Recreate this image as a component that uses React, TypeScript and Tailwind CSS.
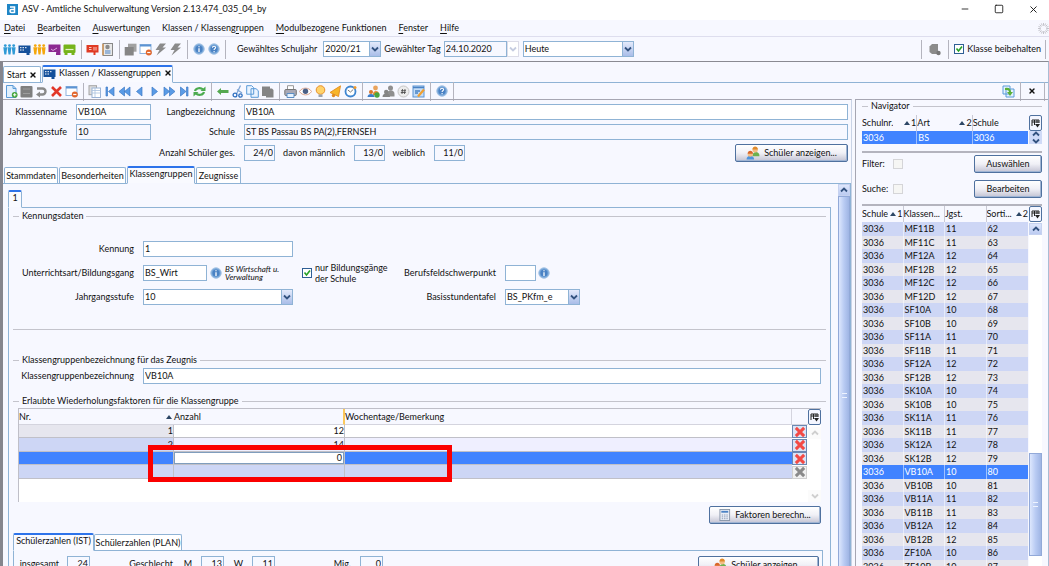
import type { ReactNode } from 'react'
import { Minus, Square, X } from 'lucide-react'
import { clsx } from 'clsx'

function Svg({ children, size = 13 }: { children: ReactNode; size?: number }) {
  return (
    <svg width={size} height={size} viewBox="0 0 13 13" fill="none" className="shrink-0" aria-hidden="true">
      {children}
    </svg>
  )
}

const people = (color: string) => (
  <Svg>
    <g fill={color}>
      <circle cx="2.3" cy="2.600" r="1.400" />
      <circle cx="6.5" cy="2.600" r="1.400" />
      <circle cx="10.7" cy="2.600" r="1.400" />
      <path d="M.3 4.300h3.900L3.300 11.500H1.300zM4.500 4.300h3.900L7.500 11.500h-2zM8.700 4.300h3.900L11.700 11.500h-2z" />
    </g>
  </Svg>
)

const board = (color: string) => (
  <Svg>
    <path d="M.5 2.500h12v7.500h-1v2h-3v-2h-8z" fill={color} />
    <path d="M2 4.700h1.500M4.500 4.700H6M2 7h1.500M4.500 7H6M7 4.700h1.500" stroke="#fff" strokeWidth="1" />
  </Svg>
)

const bolt = (
  <Svg>
    <path d="M6 .5h6L8.500 4.500h3.500L2.500 12.500l3-5.500H1.500z" fill="#8b8b8b" />
  </Svg>
)

const disc = (letter: 'i' | '?', size = 12) => (
  <Svg size={size}>
    <circle cx="6.5" cy="6.5" r="5.700" fill="#79a8da" stroke="#a5c3e4" />
    <circle cx="6.5" cy="6.5" r="3.900" fill="#4a82c4" />
    {letter === 'i'
      ? <path d="M6.500 3.400v1.200M6.500 5.700v4" stroke="#fff" strokeWidth="1.400" />
      : <path d="M4.800 5.200c0-2.200 3.500-2.200 3.500-.2 0 1.300-1.700 1.300-1.700 2.500M6.600 8.600v1.300" stroke="#fff" strokeWidth="1.200" />}
  </Svg>
)

const windowIcon = (
  <Svg>
    <rect x="1" y="1.500" width="11" height="9" fill="#fff" stroke="#8fb3de" />
    <path d="M1 2.500h11" stroke="#5b93d3" strokeWidth="2" />
    <circle cx="9.800" cy="9.500" r="3" fill="#e2662c" />
    <path d="M8.200 9.500h3.200" stroke="#fff" strokeWidth="1.200" />
  </Svg>
)

const pupils = (
  <Svg size={14}>
    <path d="M6 9c0-4.500 6.500-4.500 6.500 0v.5H6z" fill="#6cb04f" />
    <circle cx="8.500" cy="3.500" r="2.500" fill="#f3bd84" />
    <path d="M6 3.200c0-3.800 5-3.800 5 0z" fill="#e08a2b" />
    <path d="M.5 12.500c0-4.500 7-4.500 7 0z" fill="#4b93dd" />
    <circle cx="4" cy="7.500" r="2.500" fill="#f3bd84" />
    <path d="M1.500 7.200c0-3.800 5-3.800 5 0z" fill="#d9672b" />
  </Svg>
)

const playPath = (d: string) => (
  <Svg>
    <path d={d} fill="#5a9be6" stroke="#3c78c4" strokeWidth=".7" />
  </Svg>
)

const cross = (color: string, size = 13, width = 2.6) => (
  <Svg size={size}>
    <path d="M2 2l9 9M11 2l-9 9" stroke={color} strokeWidth={width} />
  </Svg>
)

const moduleIcons: { label: string; icon: ReactNode }[][] = [
  [
    { label: 'Schüler', icon: people('#2f9ad6') },
    { label: 'Klassen', icon: board('#14509b') },
    { label: 'Lehrkräfte', icon: people('#f5a70c') },
    { label: 'Unterricht', icon: <Svg><path d="M.5 1.500h12v7.500H.5z" fill="#8c2a92" /><path d="M3 6l2 1.500L9 5" stroke="#d9a6dc" /><path d="M8 9.500c1-1.500 4-1.500 4.500 0v2.500H8z" fill="#8c2a92" /></Svg> },
    { label: 'Schulen', icon: <Svg><rect x=".5" y="1.500" width="12" height="8.500" rx="1" fill="#76b41c" /><path d="M2.500 6.500h8" stroke="#e4f2c8" strokeWidth="1.200" /><path d="M1.500 11h3M8.500 11h3" stroke="#76b41c" strokeWidth="2" /></Svg> },
  ],
  [
    { label: 'Fächer', icon: <Svg><path d="M.5 2h12v7.500h-3v2.500h-2V9.500h-7z" fill="#e03a24" /><path d="M3 4.500h2.500M3 6.500h2.500M8 4v3.500M10 4v3.500" stroke="#fbc5bd" /></Svg> },
    { label: 'Berichte', icon: <Svg><rect x="2" y=".5" width="9.500" height="12" fill="#e8e8e8" stroke="#888" /><circle cx="6.500" cy="4" r="2.200" fill="#8a8a8a" /><path d="M4 8h5.500M4 10h5.500" stroke="#4a82c4" strokeWidth="1.200" /><path d="M2 1v11" stroke="#d48a3c" strokeWidth="1.200" /></Svg> },
  ],
  [
    { label: 'Stapel', icon: <Svg><path d="M4 .7h8.500v8H4z" fill="#a2a2a2" /><path d="M.7 4h9v8.500h-9z" fill="#868686" /></Svg> },
    { label: 'Fenster', icon: windowIcon },
    { label: 'Abgleich', icon: bolt },
    { label: 'Aktualisierung', icon: bolt },
  ],
  [
    { label: 'Info', icon: disc('i') },
    { label: 'Hilfe', icon: disc('?') },
  ],
]

const editIcons: { label: string; icon: ReactNode }[][] = [
  [
    { label: 'Neu', icon: <Svg><path d="M1.500.5h6.500l3 3v9H1.500z" fill="#e0effd" stroke="#5b9bd8" /><path d="M8 .5v3h3" stroke="#5b9bd8" /><circle cx="9.700" cy="9.800" r="2.900" fill="#44a63c" /><path d="M9.700 8.200v3.200M8.100 9.800h3.200" stroke="#fff" /></Svg> },
    { label: 'Speichern', icon: <Svg><rect x=".5" y="1" width="12" height="11.500" rx="1" fill="#7f7f7f" /><path d="M3 4h7M3 8.500h7" stroke="#9d9d9d" /></Svg> },
    { label: 'Rückgängig', icon: <Svg><path d="M2 3.500h5.500a3 3 0 010 6H3" stroke="#8a8a8a" strokeWidth="2.400" /><path d="M5 6.500v6l-4-3z" fill="#8a8a8a" /></Svg> },
    { label: 'Löschen', icon: cross('#e2382a') },
    { label: 'Schließen', icon: windowIcon },
  ],
  [
    { label: 'Tabelle', icon: <Svg><rect x="1" y=".7" width="7.500" height="9" fill="#ddd" stroke="#a5a5a5" /><rect x="4" y="3" width="8.500" height="9.500" fill="#fff" stroke="#9ab3d6" /><path d="M4 5.500h8.500M4 8h8.500M7 3v9" stroke="#a8c0de" strokeWidth=".8" /></Svg> },
    { label: 'Erster', icon: playPath('M3 2h1.500v9H3zM11 2v9L5.500 6.500z') },
    { label: 'Zurück blättern', icon: playPath('M6.500 2v9L1 6.500zM12 2v9L6.500 6.500z') },
    { label: 'Vorheriger', icon: playPath('M9 2v9L3.500 6.500z') },
    { label: 'Nächster', icon: playPath('M4 2v9l5.500-4.500z') },
    { label: 'Vor blättern', icon: playPath('M1 2v9l5.500-4.500zM6.500 2v9L12 6.500z') },
    { label: 'Letzter', icon: playPath('M2.500 2v9L8 6.500zM8.500 2H10v9H8.500z') },
    { label: 'Aktualisieren', icon: <Svg><path d="M2 6a4.500 3.500 0 018-1.500M11 7a4.500 3.500 0 01-8 1.500" stroke="#4bab4f" strokeWidth="2.200" /><path d="M12.500 1.500v4.500h-5zM.5 11.500V7h5z" fill="#4bab4f" /></Svg> },
  ],
  [
    { label: 'Zurück', icon: <Svg><path d="M1 6.500l4-3.500v2h7.500v3H5v2z" fill="#55a850" /></Svg> },
    { label: 'Ausschneiden', icon: <Svg><path d="M9.500.5L5.500 9M6 4.500l5 3.500" stroke="#7fa6d6" strokeWidth="1.300" /><circle cx="4" cy="10" r="1.900" stroke="#2f6fc0" strokeWidth="1.300" /><circle cx="9.500" cy="10.500" r="1.700" stroke="#2f6fc0" strokeWidth="1.300" /></Svg> },
    { label: 'Kopieren', icon: <Svg><path d="M.7.700h5l2 2v6.500h-7zM5 3.700h5l2.300 2v6.600H5z" fill="#eaf4ff" stroke="#5b9bd8" /></Svg> },
    { label: 'Einfügen', icon: <Svg><path d="M1 1.500h8v2h2l1.500 1.500v7.500H5V11H1z" fill="#858585" /></Svg> },
  ],
  [
    { label: 'Drucken', icon: <Svg><path d="M3.500 5V.7h6V5" fill="#fff" stroke="#999" /><rect x=".8" y="4.500" width="11.500" height="6" rx="1" fill="#a9a9b6" stroke="#777" /><path d="M3 8.500h7v4H3z" fill="#e6f2ff" stroke="#5b8dc4" /></Svg> },
    { label: 'Vorschau', icon: <Svg><path d="M.5 6.500C3 2 10 2 12.500 6.500 10 11 3 11 .5 6.500z" fill="#fff" stroke="#dba58f" /><circle cx="6.500" cy="6.300" r="2.700" fill="#4a5f86" /></Svg> },
    { label: 'Hinweise', icon: <Svg><circle cx="6.500" cy="5" r="4.300" fill="#ffd36b" stroke="#e88f2a" /><path d="M4.500 9.500h4v2.500h-4z" fill="#9aa3ad" /></Svg> },
    { label: 'Erinnerung', icon: <Svg><path d="M11.500.8l-2 10.700-8.500-4z" fill="#f8b62b" stroke="#e28c1f" strokeWidth=".9" /><circle cx="4.500" cy="10.500" r="1.700" fill="#e28c1f" /></Svg> },
    { label: 'Wiedervorlage', icon: <Svg><circle cx="6.500" cy="6.500" r="5" fill="#fff" stroke="#3f86d1" strokeWidth="1.800" /><path d="M3.800 5l2.700 2 2.700-2.500" stroke="#777" /><circle cx="11" cy="2.500" r="1.500" fill="#f19a2a" /></Svg> },
  ],
  [
    { label: 'Schüler zuordnen', icon: <Svg><path d="M6 9c0-4 6-4 6 0v1H6z" fill="#e48a2f" /><circle cx="8.500" cy="3" r="2.400" fill="#e9a45d" /><path d="M.5 12c0-4 7-4 7 0z" fill="#3b7cc8" /><circle cx="4" cy="7" r="2" fill="#d9752b" /><circle cx="10" cy="10" r="2.700" fill="#4aa53e" /></Svg> },
    { label: 'Gruppe', icon: <Svg><path d="M5 9c0-5 7.500-5 7.500 0v2.500H5z" fill="#8f8f8f" /><circle cx="8.500" cy="3" r="2.500" fill="#8f8f8f" /><path d="M.5 12c0-5 7.500-5 7.500 0z" fill="#858585" /><circle cx="4.200" cy="7" r="2.200" fill="#858585" /></Svg> },
    { label: 'Nummer', icon: <Svg><circle cx="6.500" cy="6.500" r="5.500" fill="#ececec" stroke="#c5c5c5" /><path d="M5.500 4L5 9M8 4l-.5 5M4 5.700h5M3.800 7.500h5" stroke="#444" strokeWidth=".8" /></Svg> },
    { label: 'Bearbeiten', icon: <Svg><rect x="1" y="1" width="11" height="11" fill="#c5ddf7" stroke="#5b93d3" /><path d="M1 2.500h11M3 6h5M3 8h3" stroke="#4a82c4" strokeWidth="1.400" /><path d="M12 4.500l-6 7" stroke="#f0a030" strokeWidth="2.200" /></Svg> },
  ],
  [{ label: 'Hilfe zum Modul', icon: disc('?') }],
]

const menus = [
  ['D', 'atei'], ['B', 'earbeiten'], ['A', 'uswertungen'], ['Klassen / Klasseng', 'r', 'uppen'],
  ['M', 'odulbezogene Funktionen'], ['F', 'enster'], ['H', 'ilfe'],
]

const classNames = [
  'MF11B', 'MF11C', 'MF12A', 'MF12B', 'MF12C', 'MF12D', 'SF10A', 'SF10B', 'SF11A', 'SF11B', 'SF12A', 'SF12B', 'SK10A',
  'SK10B', 'SK11A', 'SK11B', 'SK12A', 'SK12B', 'VB10A', 'VB10B', 'VB11A', 'VB11B', 'VB12A', 'VB12B', 'ZF10A', 'ZF10B',
]
const classes = classNames.map((name, i) => ({ name, grade: name.slice(2, 4), sort: 62 + i }))

function Separator() {
  return <span className="mr-[3px] ml-[4px] h-[19px] w-px shrink-0 bg-[#b4b4be]" />
}

function IconGroups({ groups }: { groups: { label: string; icon: ReactNode }[][] }) {
  return groups.map((group, i) => (
    <div key={i} className="flex items-center">
      {group.map(({ label, icon }) => (
        <button key={label} title={label} aria-label={label} className="flex h-4 w-[15px] items-center justify-center">
          {icon}
        </button>
      ))}
      <Separator />
    </div>
  ))
}

function Field({ label, value, className, readOnly }: { label: string; value: string; className?: string; readOnly?: boolean }) {
  return (
    <input
      aria-label={label}
      defaultValue={value}
      readOnly={readOnly}
      className={clsx('h-4 min-w-0 border border-[#8fb3d5] px-px pb-px outline-none', readOnly ? 'bg-[#f7f8ff]' : 'bg-white', className)}
    />
  )
}

function Chevron({ up, color = '#33527f' }: { up?: boolean; color?: string }) {
  return (
    <svg width="8" height="6" viewBox="0 0 8 6" fill="none" aria-hidden="true">
      <path d={up ? 'M1 4.500L4 1.500l3 3' : 'M1 1.500l3 3 3-3'} stroke={color} strokeWidth="1.800" />
    </svg>
  )
}

function Select({ label, value, className }: { label: string; value: string; className?: string }) {
  return (
    <span className={clsx('relative flex h-4', className)}>
      <select aria-label={label} className="h-full w-full appearance-none border border-[#8fb3d5] bg-white px-px pb-px outline-none">
        <option>{value}</option>
      </select>
      <span className="pointer-events-none absolute inset-y-0 right-0 flex w-3 items-center justify-center border border-[#8fb3d5] bg-linear-to-b from-[#e4eafb] to-[#a9bde8]">
        <Chevron />
      </span>
    </span>
  )
}

function Check({ label, checked, disabled }: { label: string; checked?: boolean; disabled?: boolean }) {
  return (
    <span className="relative flex size-[10px] shrink-0">
      <input
        type="checkbox"
        aria-label={label}
        defaultChecked={checked}
        disabled={disabled}
        className={clsx('size-full appearance-none border', disabled ? 'border-[#d5d5d8] bg-[#f6f6f4]' : 'border-[#2f5f95] bg-white')}
      />
      {checked && (
        <svg className="pointer-events-none absolute inset-0" width="10" height="10" viewBox="0 0 10 10" fill="none" aria-hidden="true">
          <path d="M2.500 4.500l2 2.500 3.500-4.500" stroke="#27a127" strokeWidth="1.600" />
        </svg>
      )}
    </span>
  )
}

function PushButton({ children, className }: { children: ReactNode; className?: string }) {
  return (
    <button className={clsx('flex h-[18px] items-center justify-center gap-1 rounded-[2px] border border-[#4f719f] bg-linear-to-b from-white via-[#f0f0f6] to-[#c3c3d3] shadow-[inset_-1px_-1px_0_#9fb4d3]', className)}>
      {children}
    </button>
  )
}

function Tab({ children, active, className }: { children: ReactNode; active?: boolean; className?: string }) {
  return (
    <button
      role="tab"
      aria-selected={!!active}
      className={clsx(
        'relative flex items-center justify-center gap-[3px] rounded-t-[2px] border whitespace-nowrap',
        active ? 'z-10 -mb-px h-[18px] border-x-[#8fb3d5] border-t-2 border-t-[#2d73ea] border-b-[#f7f8ff] bg-[#f9faff] pb-[3px]' : 'h-4 border-[#8fb3d5] border-b-0 bg-white',
        className,
      )}
    >
      {children}
    </button>
  )
}

function ColumnControl({ className }: { className?: string }) {
  return (
    <button aria-label="Spalten auswählen" className={clsx('flex items-center justify-center rounded-[2px] border border-[#4f719f] bg-[#f4f6ff]', className)}>
      <svg width="9" height="9" viewBox="0 0 9 9" fill="none" aria-hidden="true">
        <path d="M1 7V1h7v3M1 3h7M3.500 1v5M6 1v3" stroke="#222" />
        <path d="M4 5h5L6.500 8.500z" fill="#222" />
      </svg>
    </button>
  )
}

function SortMark({ order }: { order?: number }) {
  return (
    <span className="flex shrink-0 items-center gap-px">
      <svg width="6" height="4" viewBox="0 0 6 4" aria-hidden="true"><path d="M3 0l3 4H0z" fill="#2c4665" /></svg>
      {order}
    </span>
  )
}

function HeadCell({ children, sort }: { children: ReactNode; sort?: number }) {
  return (
    <th className="border-r border-[#c9c9d4] p-0 font-normal last:border-r-0">
      <span className="flex items-center justify-between">
        <span className="overflow-hidden text-left whitespace-nowrap">{children}</span>
        {sort && <SortMark order={sort} />}
      </span>
    </th>
  )
}

function ScrollButton({ up, disabled }: { up?: boolean; disabled?: boolean }) {
  return (
    <button
      aria-label={up ? 'Nach oben' : 'Nach unten'}
      className={clsx('flex h-3 w-full shrink-0 items-center justify-center', disabled ? 'bg-[#fbfbfb]' : 'border border-[#c6d2f0] bg-linear-to-b from-[#dfe7fc] to-[#bccbf1]')}
    >
      <Chevron up={up} color={disabled ? '#cfcfcf' : undefined} />
    </button>
  )
}

function Thumb({ className }: { className?: string }) {
  return (
    <div className={clsx('flex items-center justify-center border border-[#92a9d8] bg-linear-to-r from-[#dde7fd] via-[#b9cbf3] to-[#9fb5e4]', className)}>
      <span className="h-[5px] w-[5px] border-y border-[#eef3ff]" />
    </div>
  )
}

function Group({ title, children }: { title: string; children?: ReactNode }) {
  return (
    <fieldset className="min-w-0 border-t border-[#c4c4cc]">
      <legend className="ml-[6px] h-3 px-[3px]">{title}</legend>
      {children}
    </fieldset>
  )
}

function MenuBar() {
  return (
    <nav className="flex h-[17px] shrink-0 items-center gap-3 border-b border-[#dedeee] pl-1">
      {menus.map(parts => {
        const mid = parts.length === 3
        return (
          <button key={parts.join('')} className="whitespace-nowrap">
            {mid && parts[0]}
            <span className="underline underline-offset-2">{mid ? parts[1] : parts[0]}</span>
            {mid ? parts[2] : parts[1]}
          </button>
        )
      })}
      <svg className="ml-auto" width="11" height="11" viewBox="0 0 12 12" fill="none" aria-hidden="true">
        <path d="M6 0v3M6 9v3M0 6h3M9 6h3M1.800 1.800l2 2M8.200 8.200l2 2M1.800 10.200l2-2M8.200 3.800l2-2M3.700.500l1 2.500M7.300 9l1 2.500M8.300.500l-1 2.500M4.700 9l-1 2.500M.5 3.700L3 4.700M9 7.300l2.500 1M.5 8.300l2.500-1M9 4.700l2.500-1" stroke="#b9b9c0" strokeWidth=".9" />
      </svg>
    </nav>
  )
}

function ModuleBar() {
  return (
    <div className="flex h-6 shrink-0 items-center pl-[2px]">
      <IconGroups groups={moduleIcons} />
      <label className="ml-2 whitespace-nowrap">Gewähltes Schuljahr</label>
      <Select label="Gewähltes Schuljahr" value="2020/21" className="ml-[6px] w-[58px]" />
      <label className="ml-[3px] whitespace-nowrap">Gewählter Tag</label>
      <Field label="Gewählter Tag" value="24.10.2020" readOnly className="ml-[3px] w-[63px]" />
      <span className="flex h-4 w-3 items-center justify-center border border-[#dcdce8] bg-white"><Chevron color="#c5cce0" /></span>
      <Select label="Zeitpunkt" value="Heute" className="ml-1 w-[111px]" />
      <div className="ml-auto flex items-center">
        <Separator />
        <button aria-label="Datenbank" className="mx-[3px]">
          <Svg><path d="M4 1h6v10H4L1.500 9V3.500z" fill="#8b8b8b" /><circle cx="10.500" cy="10" r="2.200" fill="#777" /></Svg>
        </button>
        <Separator />
        <label className="ml-[2px] flex items-center gap-[3px] whitespace-nowrap">
          <Check label="Klasse beibehalten" checked />
          Klasse beibehalten
        </label>
        <Separator />
      </div>
    </div>
  )
}

function ClassHeader() {
  return (
    <div className="flex flex-col gap-1 pt-1 pr-[3px]">
      <div className="flex items-center">
        <span className="w-16 text-right">Klassenname</span>
        <Field label="Klassenname" value="VB10A" className="ml-[9px] w-[75px]" />
        <span className="w-[84px] text-right">Langbezeichnung</span>
        <Field label="Langbezeichnung" value="VB10A" className="ml-[9px] flex-1" />
      </div>
      <div className="flex items-center">
        <span className="w-16 text-right">Jahrgangsstufe</span>
        <Field label="Jahrgangsstufe" value="10" readOnly className="ml-[9px] w-[75px]" />
        <span className="w-[84px] text-right">Schule</span>
        <Field label="Schule" value="ST BS Passau BS PA(2),FERNSEH" readOnly className="ml-[9px] flex-1" />
      </div>
      <div className="flex items-center">
        <span className="w-[232px] text-right">Anzahl Schüler ges.</span>
        <Field label="Anzahl Schüler gesamt" value="24/0" readOnly className="ml-[9px] w-[31px] text-right" />
        <span className="w-[70px] text-right">davon männlich</span>
        <Field label="davon männlich" value="13/0" readOnly className="ml-[9px] w-[31px] text-right" />
        <span className="w-10 text-right">weiblich</span>
        <Field label="weiblich" value="11/0" readOnly className="ml-[9px] w-[31px] text-right" />
        <PushButton className="ml-auto w-[113px]">{pupils}Schüler anzeigen...</PushButton>
      </div>
    </div>
  )
}

function FactorTable() {
  const rows = [
    { nr: '1', count: '12', left: 'bg-[#e6e6ee]', right: 'bg-white' },
    { nr: '2', count: '14', left: 'bg-[#cdd6f5]', right: 'bg-[#efefff]' },
    { nr: '', count: '0', left: 'bg-[#4083ff]', right: 'bg-[#4083ff]', editing: true },
    { nr: '', count: '', left: 'bg-[#cdd6f5]', right: 'bg-[#cdd6f5]' },
  ]
  return (
    <div className="relative mx-[5px] flex h-[94px] border-t border-l border-[#bfbfc8] bg-white">
      <div className="min-w-0 flex-1">
        <table className="w-full table-fixed border-separate border-spacing-0">
          <colgroup>
            <col className="w-[155px]" />
            <col className="w-[171px]" />
            <col />
            <col className="w-4" />
          </colgroup>
          <thead>
            <tr className="h-4 bg-[#f7f8ff]">
              <th className="border-b border-[#d4d4de] p-0 font-normal">
                <span className="flex items-center justify-between pr-[2px]">Nr.<SortMark /></span>
              </th>
              <th className="border-r-2 border-b border-r-[#fbc95c] border-b-[#d4d4de] p-0 text-left font-normal">Anzahl</th>
              <th className="border-r border-b border-[#d4d4de] p-0 text-left font-normal">Wochentage/Bemerkung</th>
              <th className="border-b border-[#d4d4de] p-0" />
            </tr>
          </thead>
          <tbody>
            {rows.map((row, i) => (
              <tr key={i} className="h-[13px] even:h-[14px]">
                <td className={clsx('border-r border-b border-[#c0c0c8] p-0 text-right', row.left)}>{row.nr}</td>
                <td className={clsx('border-r border-b border-[#c0c0c8] p-0 text-right', row.editing ? 'bg-white' : row.right)}>
                  {row.editing
                    ? <input aria-label="Anzahl" defaultValue={row.count} className="block h-3 w-full border border-[#7f9dbd] bg-white pr-px text-right outline-none" />
                    : row.count}
                </td>
                <td className={clsx('border-b border-[#c0c0c8] p-0', row.right)} />
                <td className="p-0">
                  <button
                    aria-label="Zeile löschen"
                    className={clsx('flex h-[13px] w-[15px] items-center justify-center border', i < 3 ? 'border-[#6b88b3] bg-[#dbe4f6]' : 'border-[#d0d0d0] bg-[#f0f0f0]')}
                  >
                    {cross(i < 3 ? '#f34a45' : '#8a8a8a', 12, 3.2)}
                  </button>
                </td>
              </tr>
            ))}
          </tbody>
        </table>
      </div>
      <div className="flex w-[13px] flex-col justify-between">
        <div>
          <ColumnControl className="mb-[2px] h-4 w-full" />
          <ScrollButton up disabled />
        </div>
        <ScrollButton disabled />
      </div>
      {/* highlight around the edited cell */}
      <div className="pointer-events-none absolute top-[36px] left-[129px] h-[37px] w-[304px] border-[5px] border-[#fb0000]" />
    </div>
  )
}

function GroupPanel() {
  return (
    <div className="min-w-0 flex-1 pt-[6px] pr-[7px] pl-[5px]">
      <div role="tablist" className="flex items-end border-b border-[#8fb3d5]">
        <Tab active className="w-[14px]">1</Tab>
      </div>
      <div className="flex flex-col border-x border-[#8fb3d5] pt-[2px] pr-[4px] pb-10 pl-[4px]">
        <Group title="Kennungsdaten">
          <div className="grid grid-cols-[121px_1fr] items-center gap-x-[9px] gap-y-2 pt-[19px] pb-6">
            <span className="text-right">Kennung</span>
            <Field label="Kennung" value="1" className="w-[150px]" />
            <span className="text-right whitespace-nowrap">Unterrichtsart/Bildungsgang</span>
            <div className="flex h-4 items-center">
              <Field label="Unterrichtsart/Bildungsgang" value="BS_Wirt" className="w-16" />
              <button aria-label="Info Bildungsgang" className="ml-[3px]">{disc('i')}</button>
              <p className="ml-[3px] w-[74px] text-[8px] leading-[8px] italic">BS Wirtschaft u. Verwaltung</p>
              <label className="ml-[3px] flex w-[99px] items-center gap-[3px] leading-[11px]">
                <Check label="nur Bildungsgänge der Schule" checked />
                <span className="whitespace-nowrap">nur Bildungsgänge<br />der Schule</span>
              </label>
              <span className="w-[95px] text-right">Berufsfeldschwerpunkt</span>
              <Field label="Berufsfeldschwerpunkt" value="" className="ml-[9px] w-[31px]" />
              <button aria-label="Info Schwerpunkt" className="ml-[2px]">{disc('i')}</button>
            </div>
            <span className="text-right">Jahrgangsstufe</span>
            <div className="flex items-center">
              <Select label="Jahrgangsstufe der Gruppe" value="10" className="w-[150px]" />
              <span className="w-[203px] text-right">Basisstundentafel</span>
              <Select label="Basisstundentafel" value="BS_PKfm_e" className="ml-[9px] w-[75px]" />
            </div>
          </div>
        </Group>
        <hr className="mb-6 border-[#c4c4cc]" />
        <Group title="Klassengruppenbezeichnung für das Zeugnis">
          <div className="grid grid-cols-[121px_1fr] items-center gap-x-[9px] pt-[2px] pr-[5px] pb-[11px]">
            <span className="text-right">Klassengruppenbezeichnung</span>
            <Field label="Klassengruppenbezeichnung" value="VB10A" />
          </div>
        </Group>
        <Group title="Erlaubte Wiederholungsfaktoren für die Klassengruppe">
          <div className="pt-px"><FactorTable /></div>
          <div className="flex justify-end pt-1 pr-[5px]">
            <PushButton className="w-28">
              <Svg size={12}><rect x="1" y=".5" width="10.500" height="12" fill="#e9eef6" stroke="#8794a8" /><path d="M2.500 3h7.500" stroke="#4a82c4" strokeWidth="2" /><path d="M3 6.500h7M3 8.500h7M3 10.500h7" stroke="#8898b4" strokeDasharray="1.500 1" /></Svg>
              Faktoren berechn...
            </PushButton>
          </div>
        </Group>
        <div role="tablist" className="mt-[9px] mr-[3px] flex items-end border-b border-[#8fb3d5]">
          <Tab active className="w-[81px]">Schülerzahlen (IST)</Tab>
          <Tab className="w-[88px]">Schülerzahlen (PLAN)</Tab>
        </div>
        <div className="mr-[3px] flex h-10 items-start border-x border-[#8fb3d5] pt-[5px] pr-[3px] leading-4">
          <span className="w-[45px] text-right">insgesamt</span>
          <Field label="insgesamt" value="24" readOnly className="ml-[8px] w-[23px] text-right" />
          <span className="w-[83px] text-right">Geschlecht</span>
          <span className="w-[19px] text-right">M</span>
          <Field label="Anzahl M" value="13" readOnly className="ml-[9px] w-[23px] text-right" />
          <span className="w-[19px] text-right">W</span>
          <Field label="Anzahl W" value="11" readOnly className="ml-[9px] w-[23px] text-right" />
          <span className="w-[76px] text-right">Mig.</span>
          <Field label="Mig." value="0" readOnly className="ml-[9px] w-[23px] text-right" />
          <PushButton className="ml-auto w-[121px]">{pupils}Schüler anzeigen...</PushButton>
        </div>
      </div>
    </div>
  )
}

function Navigator() {
  return (
    <aside className="flex w-[193px] shrink-0 flex-col border-t border-l border-[#a6a6b2] px-[6px]">
      <Group title="Navigator">
        <div className="flex pt-[3px]">
          <div className="min-w-0 flex-1">
            <table className="w-full table-fixed border-separate border-spacing-0">
              <thead>
                <tr className="h-4">
                  <HeadCell sort={1}>Schulnr.</HeadCell>
                  <HeadCell sort={2}>Art</HeadCell>
                  <HeadCell>Schule</HeadCell>
                </tr>
              </thead>
              <tbody>
                <tr className="h-[13px] bg-[#4083ff] text-white">
                  <td className="border-r border-[#9dbefc] p-0 pl-px">3036</td>
                  <td className="border-r border-[#9dbefc] p-0 pl-px">BS</td>
                  <td className="p-0 pl-px">3036</td>
                </tr>
              </tbody>
            </table>
          </div>
          <div className="ml-px flex w-[13px] flex-col">
            <ColumnControl className="h-4 w-full" />
            <div className="flex h-[13px] flex-col items-center justify-center gap-px bg-[#cfdaf7]"><Chevron up /><Chevron /></div>
          </div>
        </div>
      </Group>
      <div className="mt-[7px] border-t-2 border-[#b4b4be]" />
      {['Filter:', 'Suche:'].map((label, i) => (
        <div key={label} className="flex items-center pt-[2px] pb-[5px]">
          <span className="w-[31px]">{label}</span>
          <Check label={label} disabled />
          <PushButton className="ml-auto w-[68px]">{i === 0 ? 'Auswählen' : 'Bearbeiten'}</PushButton>
        </div>
      ))}
      <div className="mt-px flex border-t-2 border-[#b4b4be]">
        <div className="min-w-0 flex-1">
          <table className="w-full table-fixed border-separate border-spacing-0">
            <thead>
              <tr className="h-4">
                <HeadCell sort={1}>Schule</HeadCell>
                <HeadCell>Klassen...</HeadCell>
                <HeadCell>Jgst.</HeadCell>
                <HeadCell sort={2}>Sorti...</HeadCell>
              </tr>
            </thead>
            <tbody>
              {classes.map((c, i) => (
                <tr key={c.name} className={clsx(i % 2 ? 'h-[13px] bg-[#e6e6ee]' : 'h-[14px]', c.name === 'VB10A' ? 'bg-[#4083ff] text-white' : i % 2 === 0 && 'bg-[#cdd6f5]')}>
                  {['3036', c.name, c.grade, c.sort].map((cell, j) => (
                    <td key={j} className="border-r border-white/50 p-0 pl-px last:border-r-0">{cell}</td>
                  ))}
                </tr>
              ))}
            </tbody>
          </table>
        </div>
        <div className="ml-px flex w-[13px] flex-col bg-white">
          <ColumnControl className="mb-px h-4 w-full" />
          <ScrollButton up />
          <Thumb className="mt-[218px] h-[103px] w-full" />
        </div>
      </div>
    </aside>
  )
}

export default function App() {
  return (
    <div className="flex h-screen flex-col overflow-hidden bg-[#f7f8ff] font-['Lato',sans-serif] text-[9px] leading-[12px] text-[#111]">
      <header className="flex h-5 shrink-0 items-center bg-white pr-[10px] pb-[2px] pl-[7px]">
        <svg width="11" height="11" viewBox="0 0 11 11" fill="none" aria-hidden="true">
          <rect width="11" height="11" fill="#1f86c6" />
          <path d="M3 3h4.500v6M7.500 5.500H4.500a1.500 1.500 0 000 3h3" stroke="#fff" strokeWidth="1.500" />
        </svg>
        <h1 className="ml-1">ASV - Amtliche Schulverwaltung Version 2.13.474_035_04_by</h1>
        <div className="ml-auto flex gap-6">
          <button aria-label="Minimieren"><Minus size={10} /></button>
          <button aria-label="Maximieren"><Square size={10} /></button>
          <button aria-label="Schließen"><X size={11} /></button>
        </div>
      </header>
      <MenuBar />
      <ModuleBar />

      <main className="flex min-h-0 flex-1 flex-col border-t border-r border-l-3 border-t-[#8a8a92] border-r-[#a9bcd4] border-l-[#85858d]">
        <div role="tablist" className="flex h-[21px] shrink-0 items-end gap-px border-b border-[#8fb3d5]">
          <Tab className="w-[38px]">Start<X size={8} strokeWidth={4} /></Tab>
          <Tab active className="w-[131px]">
            {board('#14509b')}Klassen / Klassengruppen<X size={8} strokeWidth={4} />
          </Tab>
        </div>
        <div className="flex h-4 shrink-0 items-center pl-px">
          <IconGroups groups={editIcons} />
          <div className="ml-auto flex items-center">
            <button aria-label="Verknüpfen" className="mr-px">
              <Svg><path d="M1 1h7v8H1zM4 4h8v8H4z" fill="#e4f3ff" stroke="#5b9bd8" /><path d="M3 3c4-1 6 1 6 4h2l-3 4-3-4h2c0-2-2-2-4-2z" fill="#5ab038" /></Svg>
            </button>
            <Separator />
            <button aria-label="Modul schließen" className="mx-[4px]"><X size={8} strokeWidth={4} /></button>
            <Separator />
          </div>
        </div>
        <div className="flex min-h-0 flex-1 gap-[3px]">
          <section className="flex min-w-0 flex-1 flex-col border-t border-r border-t-[#a6a6b2] border-r-[#c9d3e6]">
            <ClassHeader />
            <div role="tablist" className="mt-1 flex items-end gap-px border-b border-[#8fb3d5] pl-px">
              <Tab className="w-[54px]">Stammdaten</Tab>
              <Tab className="w-[67px]">Besonderheiten</Tab>
              <Tab active className="w-[68px]">Klassengruppen</Tab>
              <Tab className="w-[45px]">Zeugnisse</Tab>
            </div>
            <div className="flex min-h-0 flex-1 border-r border-[#8fb3d5]">
              <GroupPanel />
              <div className="flex w-3 shrink-0 flex-col">
                <ScrollButton up />
                <Thumb className="h-[399px] shrink-0" />
              </div>
            </div>
          </section>
          <Navigator />
        </div>
      </main>
    </div>
  )
}
